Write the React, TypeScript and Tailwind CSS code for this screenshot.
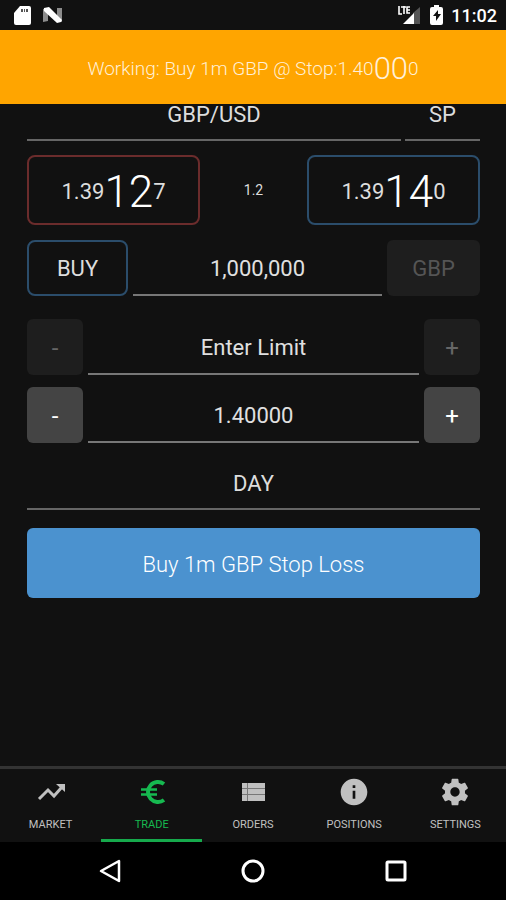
import type { ReactNode } from "react";
import { MdInfo } from "react-icons/md";

function StatusBar() {
  return (
    <header className="flex h-[30px] items-center justify-between bg-[#111111] pl-[14px] pr-[9px]">
      <div className="flex items-center gap-3">
        <svg width="17" height="19" viewBox="0 0 17 19" aria-label="SD card">
          <path d="M6 0H15a2 2 0 0 1 2 2v15a2 2 0 0 1-2 2H2a2 2 0 0 1-2-2V7z" fill="#ffffff" />
          <path d="M7 3h2v3H7zM10 3h1v3h-1zM12 3h2v3h-2z" fill="#555555" />
        </svg>
        <svg width="20" height="16" viewBox="0 0 20 16" aria-label="Notification">
          <path d="M0 2l5-1v13l-5 1zM14 1l5 0v14l-5-2z" fill="#8c8c8c" />
          <path d="M1 1l5-1 13 13-1 2-4 1L1 4z" fill="#ffffff" />
        </svg>
      </div>
      <div className="flex items-center">
        <svg width="22" height="20" viewBox="0 0 22 20" aria-label="LTE signal">
          <path d="M15 8l7-6v17h-7z" fill="#555555" />
          <path d="M5 19L16 8v11z" fill="#ffffff" />
          <path
            d="M1 1v8h3M3 2h5M6 1v8M12 2H9v6h3M9 5h3"
            fill="none"
            stroke="#ffffff"
            strokeWidth="1.6"
          />
        </svg>
        <svg className="ml-[10px]" width="13" height="20" viewBox="0 0 13 20" aria-label="Battery charging">
          <path d="M4 0h5v2h2a2 2 0 0 1 2 2v14a2 2 0 0 1-2 2H2a2 2 0 0 1-2-2V4a2 2 0 0 1 2-2h2z" fill="#ffffff" />
          <path d="M8 5L3 11h3v5l5-7H8z" fill="#111111" />
        </svg>
        <span className="ml-2 pt-[2px] text-[18px] leading-none font-medium text-white">11:02</span>
      </div>
    </header>
  );
}

type PriceProps = { lead: string; pips: string; tail: string; tone: string };

function PriceButton({ lead, pips, tail, tone }: PriceProps) {
  return (
    <button
      className={`flex h-[70px] w-[38.2%] items-center justify-center rounded-lg border-2 pt-1 text-[22px] leading-none ${tone}`}
    >
      <span>{lead}</span>
      <span className="text-[44px] font-light text-white">{pips}</span>
      <span>{tail}</span>
    </button>
  );
}

type FieldProps = { label: string; value?: string; placeholder?: string };

function Field({ label, value, placeholder }: FieldProps) {
  return (
    <input
      className="h-14 min-w-0 flex-1 border-b-2 border-[#777777] bg-transparent pt-[2px] text-center text-[22px] text-[#e0e0e0] outline-none placeholder:text-[#e0e0e0]"
      aria-label={label}
      defaultValue={value}
      placeholder={placeholder}
    />
  );
}

function Stepper({ label, value, placeholder, disabled }: FieldProps & { disabled?: boolean }) {
  const key =
    "h-14 w-14 shrink-0 rounded-md bg-[#444444] pt-[2px] text-2xl text-white disabled:bg-[#1e1e1e] disabled:text-[#666666]";
  return (
    <div className="flex gap-[5px]">
      <button className={key} disabled={disabled} aria-label={`Decrease ${label}`}>
        -
      </button>
      <Field label={label} value={value} placeholder={placeholder} />
      <button className={key} disabled={disabled} aria-label={`Increase ${label}`}>
        +
      </button>
    </div>
  );
}

function Picker({ label, value, className }: { label: string; value: string; className: string }) {
  return (
    <select
      aria-label={label}
      className={`min-w-0 appearance-none border-b-2 border-[#666666] bg-transparent text-center text-[22px] leading-none outline-none ${className}`}
    >
      <option>{value}</option>
    </select>
  );
}

function GearIcon() {
  return (
    <svg width="32" height="32" viewBox="0 0 24 24" fill="currentColor" aria-hidden="true">
      <path d="M19.430 12.980c.04-.32.07-.64.07-.98s-.03-.66-.07-.98l2.110-1.650c.19-.15.24-.42.12-.64l-2-3.460c-.12-.22-.39-.3-.61-.22l-2.490 1c-.52-.4-1.080-.73-1.690-.98l-.38-2.650C14.460 2.180 14.250 2 14 2h-4c-.25 0-.46.18-.49.42l-.38 2.650c-.61.25-1.170.59-1.690.98l-2.490-1c-.23-.09-.49 0-.61.22l-2 3.460c-.13.22-.07.49.12.64l2.110 1.650c-.04.32-.07.65-.07.98s.03.66.07.98l-2.110 1.650c-.19.15-.24.42-.12.64l2 3.460c.12.22.39.3.61.22l2.490-1c.52.4 1.080.73 1.690.98l.38 2.650c.03.24.24.42.49.42h4c.25 0 .46-.18.49-.42l.38-2.650c.61-.25 1.170-.59 1.690-.98l2.490 1c.23.09.49 0 .61-.22l2-3.460c.12-.22.07-.49-.12-.64l-2.110-1.650zM12 15.500c-1.930 0-3.500-1.570-3.500-3.500s1.570-3.500 3.500-3.500 3.500 1.570 3.500 3.500-1.570 3.500-3.500 3.500z" />
    </svg>
  );
}

function TrendIcon() {
  return (
    <svg width="32" height="32" viewBox="0 0 32 32" fill="none" stroke="currentColor" aria-hidden="true">
      <path d="M4 23l9-9 6 6 8-9" strokeWidth="3" />
      <path d="M21 8h9v8z" fill="currentColor" stroke="none" />
    </svg>
  );
}

function EuroIcon() {
  return (
    <svg width="32" height="32" viewBox="0 0 32 32" fill="none" stroke="currentColor" aria-hidden="true">
      <path d="M28 8A10 10 0 1 0 28 24" strokeWidth="4" />
      <path d="M5 13.500h16M5 18.500h16" strokeWidth="2.500" />
    </svg>
  );
}

function ListIcon() {
  return (
    <svg width="32" height="32" viewBox="0 0 32 32" aria-hidden="true">
      <path d="M5 7h23v18H5z" fill="#777777" />
      <path
        d="M5 7h5v5H5zM5 13h5v5H5zM5 19h5v6H5zM11 7h17v5H11zM11 13h17v5H11zM11 19h17v6H11z"
        fill="currentColor"
      />
    </svg>
  );
}

const tabs: { label: string; icon: ReactNode; active?: boolean }[] = [
  { label: "MARKET", icon: <TrendIcon /> },
  { label: "TRADE", icon: <EuroIcon />, active: true },
  { label: "ORDERS", icon: <ListIcon /> },
  { label: "POSITIONS", icon: <MdInfo size={32} /> },
  { label: "SETTINGS", icon: <GearIcon /> },
];

export default function App() {
  return (
    <div className="flex min-h-screen flex-col bg-[#111111] font-['Roboto',sans-serif] text-[#dddddd]">
      <StatusBar />
      <div
        role="status"
        className="flex h-[74px] items-center justify-center bg-[#ffa500] pt-[2px] text-[19px] leading-none font-light text-[#fff0d8]"
      >
        <span>Working: Buy 1m GBP @ Stop:1.40</span>
        <span className="text-[31px]">00</span>
        <span>0</span>
      </div>

      <main className="flex flex-1 flex-col pr-[26px] pl-[27px]">
        <div className="flex gap-1">
          <Picker label="Currency pair" value="GBP/USD" className="h-[37px] flex-[374] pb-[14px]" />
          <Picker label="Settlement" value="SP" className="h-[37px] flex-[75] pb-[14px]" />
        </div>
        <div className="mt-[14px] flex items-center justify-between">
          <PriceButton lead="1.39" pips="12" tail="7" tone="border-[#6b2c2c]" />
          <span className="text-sm">1.2</span>
          <PriceButton lead="1.39" pips="14" tail="0" tone="border-[#2b4d6b]" />
        </div>
        <div className="mt-[15px] flex gap-[5px]">
          <button className="h-14 w-[101px] rounded-lg border-2 border-[#2b4d6b] text-[22px]">BUY</button>
          <Field label="Amount" value="1,000,000" />
          <button disabled className="h-14 w-[93px] rounded-md bg-[#1e1e1e] text-[22px] text-[#555555]">
            GBP
          </button>
        </div>
        <div className="mt-[23px] flex flex-col gap-3">
          <Stepper label="Limit" placeholder="Enter Limit" disabled />
          <Stepper label="Stop" value="1.40000" />
        </div>
        <Picker label="Time in force" value="DAY" className="mt-3 h-[55px] w-full pt-1" />
        <button className="mt-[18px] h-[70px] rounded-md bg-[#4b92cf] pt-[2px] text-[22px] font-light text-white">
          Buy 1m GBP Stop Loss
        </button>
      </main>

      <nav className="grid h-[76px] grid-cols-5 border-t-3 border-[#333333]">
        {tabs.map((tab) => (
          <button
            key={tab.label}
            aria-current={tab.active ? "page" : undefined}
            className={`flex flex-col items-center gap-[9px] border-b-3 pt-[7px] text-[11px] leading-4 ${
              tab.active ? "border-[#16a94c] text-[#16b950]" : "border-transparent text-[#c0c0c0]"
            }`}
          >
            {tab.icon}
            <span>{tab.label}</span>
          </button>
        ))}
      </nav>

      <footer className="flex h-[58px] items-center justify-center gap-[120px] bg-black text-white">
        <button aria-label="Back">
          <svg width="22" height="24" viewBox="0 0 22 24" fill="none" stroke="currentColor" strokeWidth="2.500">
            <path d="M20 2v20L2 12z" strokeLinejoin="round" />
          </svg>
        </button>
        <button aria-label="Home">
          <svg width="24" height="24" viewBox="0 0 24 24" fill="none" stroke="currentColor" strokeWidth="3">
            <circle cx="12" cy="12" r="10" />
          </svg>
        </button>
        <button aria-label="Recent apps">
          <svg width="22" height="22" viewBox="0 0 22 22" fill="none" stroke="currentColor" strokeWidth="3">
            <rect x="2" y="2" width="18" height="18" rx="1" />
          </svg>
        </button>
      </footer>
    </div>
  );
}
